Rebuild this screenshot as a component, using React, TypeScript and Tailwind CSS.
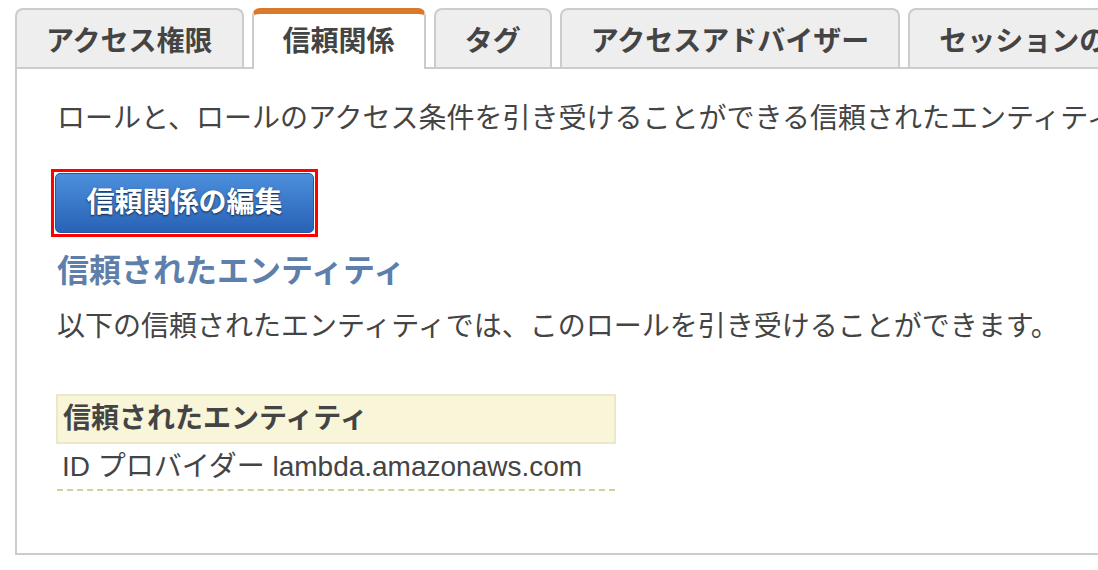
import React from 'react';

const tabs = [
  { label: 'アクセス権限', active: false },
  { label: '信頼関係', active: true },
  { label: 'タグ', active: false },
  { label: 'アクセスアドバイザー', active: false },
  { label: 'セッションの無効化', active: false },
];

const App = () => {
  return (
    <div className="w-[1098px] h-[570px] overflow-hidden bg-white pl-[15px] pt-[8px] font-['Liberation_Sans','Noto_Sans_CJK_JP',sans-serif] text-[#444]">
      {/* タブ */}
      <div className="relative z-10 flex items-start gap-2 -mb-[2px] whitespace-nowrap">
        {tabs.map((tab) =>
          tab.active ? (
            <div
              key={tab.label}
              className="h-[61px] shrink-0 px-[29px] pt-[10px] rounded-t-[8px] bg-white border-x-2 border-x-[#ccc] border-t-[6px] border-t-[#d97a2b] text-[28px] leading-[36px] font-bold"
            >
              {tab.label}
            </div>
          ) : (
            <div
              key={tab.label}
              className="h-[59px] shrink-0 px-[29px] pt-[14px] rounded-t-[8px] bg-[#eeeeee] border-2 border-b-0 border-[#ccc] text-[28px] leading-[36px] font-bold"
            >
              {tab.label}
            </div>
          )
        )}
      </div>

      {/* パネル */}
      <div className="w-[1200px] h-[488px] border-2 border-r-0 border-[#ccc] pl-[40px] pt-[30px]">
        <p className="text-[28px] leading-[40px] whitespace-nowrap">
          ロールと、ロールのアクセス条件を引き受けることができる信頼されたエンティティについて説明します。
        </p>

        <div className="mt-[30px] -ml-[6px] inline-block border-[3px] border-[#ff0000] p-px">
          <button className="h-[60px] w-[259px] rounded-[5px] border border-[#2557a3] bg-gradient-to-b from-[#4c8fdc] to-[#2962b6] text-white text-[28px] font-bold leading-none [text-shadow:0_1px_2px_rgba(0,0,0,0.7)]">
            信頼関係の編集
          </button>
        </div>

        <h3 className="mt-[14px] text-[32px] leading-[40px] font-bold text-[#5e7fab]">
          信頼されたエンティティ
        </h3>

        <p className="mt-[16px] text-[28px] leading-[40px] whitespace-nowrap">
          以下の信頼されたエンティティでは、このロールを引き受けることができます。
        </p>

        <table className="mt-[47px] -ml-[1px] w-[560px] border-collapse">
          <thead>
            <tr>
              <th className="h-[48px] bg-[#f8f5d8] border-2 border-[#ebe8c6] px-[5px] text-left text-[28px] leading-[36px] font-bold">
                信頼されたエンティティ
              </th>
            </tr>
          </thead>
          <tbody>
            <tr>
              <td className="h-[47px] px-[5px] text-[28px] leading-[36px] border-b-2 border-dashed border-[#d3cf9f]">
                ID プロバイダー lambda.amazonaws.com
              </td>
            </tr>
          </tbody>
        </table>
      </div>
    </div>
  );
};

export default App;
